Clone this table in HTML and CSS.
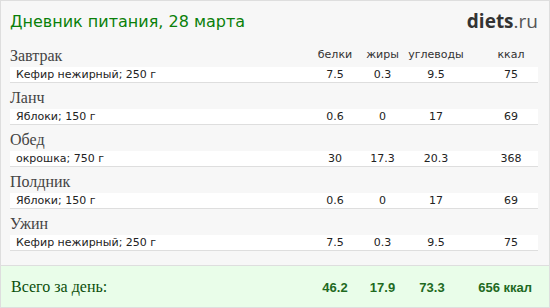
FILE: index.html
```html
<!DOCTYPE html>
<html lang="ru">
<head>
  <meta charset="UTF-8">
  <meta name="viewport" content="width=device-width, initial-scale=1.0">
  <title>Дневник питания, 28 марта</title>
  <link rel="stylesheet" href="styles.css">
</head>
<body>
  <div class="diary">
    <header class="top">
      <h1 class="title">Дневник питания, 28 марта</h1>
      <div class="logo"><b>diets</b>.ru</div>
    </header>

    <section class="meal">
      <div class="meal-head cols">
        <h2>Завтрак</h2>
        <span class="label">белки</span>
        <span class="label">жиры</span>
        <span class="label">углеводы</span>
        <span class="label kcal">ккал</span>
      </div>
      <div class="item cols">
        <span class="name">Кефир нежирный; 250 г</span>
        <span>7.5</span><span>0.3</span><span>9.5</span><span class="kcal">75</span>
      </div>
    </section>

    <section class="meal">
      <div class="meal-head cols"><h2>Ланч</h2></div>
      <div class="item cols">
        <span class="name">Яблоки; 150 г</span>
        <span>0.6</span><span>0</span><span>17</span><span class="kcal">69</span>
      </div>
    </section>

    <section class="meal">
      <div class="meal-head cols"><h2>Обед</h2></div>
      <div class="item cols">
        <span class="name">окрошка; 750 г</span>
        <span>30</span><span>17.3</span><span>20.3</span><span class="kcal">368</span>
      </div>
    </section>

    <section class="meal">
      <div class="meal-head cols"><h2>Полдник</h2></div>
      <div class="item cols">
        <span class="name">Яблоки; 150 г</span>
        <span>0.6</span><span>0</span><span>17</span><span class="kcal">69</span>
      </div>
    </section>

    <section class="meal">
      <div class="meal-head cols"><h2>Ужин</h2></div>
      <div class="item cols">
        <span class="name">Кефир нежирный; 250 г</span>
        <span>7.5</span><span>0.3</span><span>9.5</span><span class="kcal">75</span>
      </div>
    </section>

    <footer class="total">
      <div class="cols">
        <span class="total-label">Всего за день:</span>
        <b>46.2</b><b>17.9</b><b class="carbs">73.3</b><b class="kcal">656 ккал</b>
      </div>
    </footer>
  </div>
</body>
</html>
```

FILE: styles.css
```css
body {
  margin: 0;
  padding: 0;
}
.diary {
  box-sizing: border-box;
  width: 550px;
  height: 308px;
  border: 1px solid #dedede;
  background-color: #f7f7f7;
  display: flex;
  flex-direction: column;
  font-family: 'DejaVu Sans', Verdana, sans-serif;
}
.top {
  height: 40px;
  box-sizing: border-box;
  padding: 6px 11px 0 9px;
  display: flex;
  justify-content: space-between;
  align-items: baseline;
}
.title {
  margin: 0;
  font-size: 16px;
  line-height: 20px;
  font-weight: normal;
  color: #0a800a;
}
.logo {
  font-family: 'Open Sans', sans-serif;
  font-size: 19px;
  color: #555;
  position: relative;
  top: 1px;
}
.logo b {
  color: #333;
}

/* shared column grid: name | белки | жиры | углеводы | ккал */
.cols {
  display: grid;
  grid-template-columns: 300px 50px 45px 62px 70px;
  margin: 0 11px 0 9px;
}
.cols > span,
.cols > b {
  text-align: center;
  white-space: nowrap;
}
.cols > .kcal {
  padding-left: 18px;
}

.meal-head {
  height: 26px;
  box-sizing: border-box;
  padding-top: 5px;
  align-items: end;
}
.meal-head h2 {
  margin: 0;
  padding-bottom: 1px;
  font-family: 'Liberation Serif', 'Times New Roman', serif;
  font-size: 16px;
  line-height: 20px;
  font-weight: normal;
  color: #444;
}
.label {
  font-size: 11px;
  line-height: 14px;
  color: #333;
  padding-bottom: 5px;
}
.item {
  background-color: #fff;
  border-bottom: 1px solid #dedede;
  height: 16px;
  box-sizing: border-box;
  font-size: 11px;
  line-height: 15px;
  color: #222;
}
.cols > .name {
  text-align: left;
  padding-left: 6px;
}

.total {
  margin-top: auto;
  height: 42px;
  box-sizing: border-box;
  border-top: 1px solid #dedede;
  background-color: #e9fde9;
  display: flex;
  align-items: center;
}
.total .cols {
  flex: 1;
  align-items: baseline;
}
.total-label {
  font-family: 'Liberation Serif', 'Times New Roman', serif;
  font-size: 16px;
  color: #0b4f0b;
}
.cols > .total-label {
  text-align: left;
  padding-left: 1px;
}
.total b {
  font-family: 'Liberation Sans', Arial, sans-serif;
  font-size: 13px;
  color: #1f6a1f;
}
.total .carbs {
  padding-right: 8px;
}
.total .kcal {
  padding-left: 0;
  padding-right: 5px;
  text-align: right;
}
```
